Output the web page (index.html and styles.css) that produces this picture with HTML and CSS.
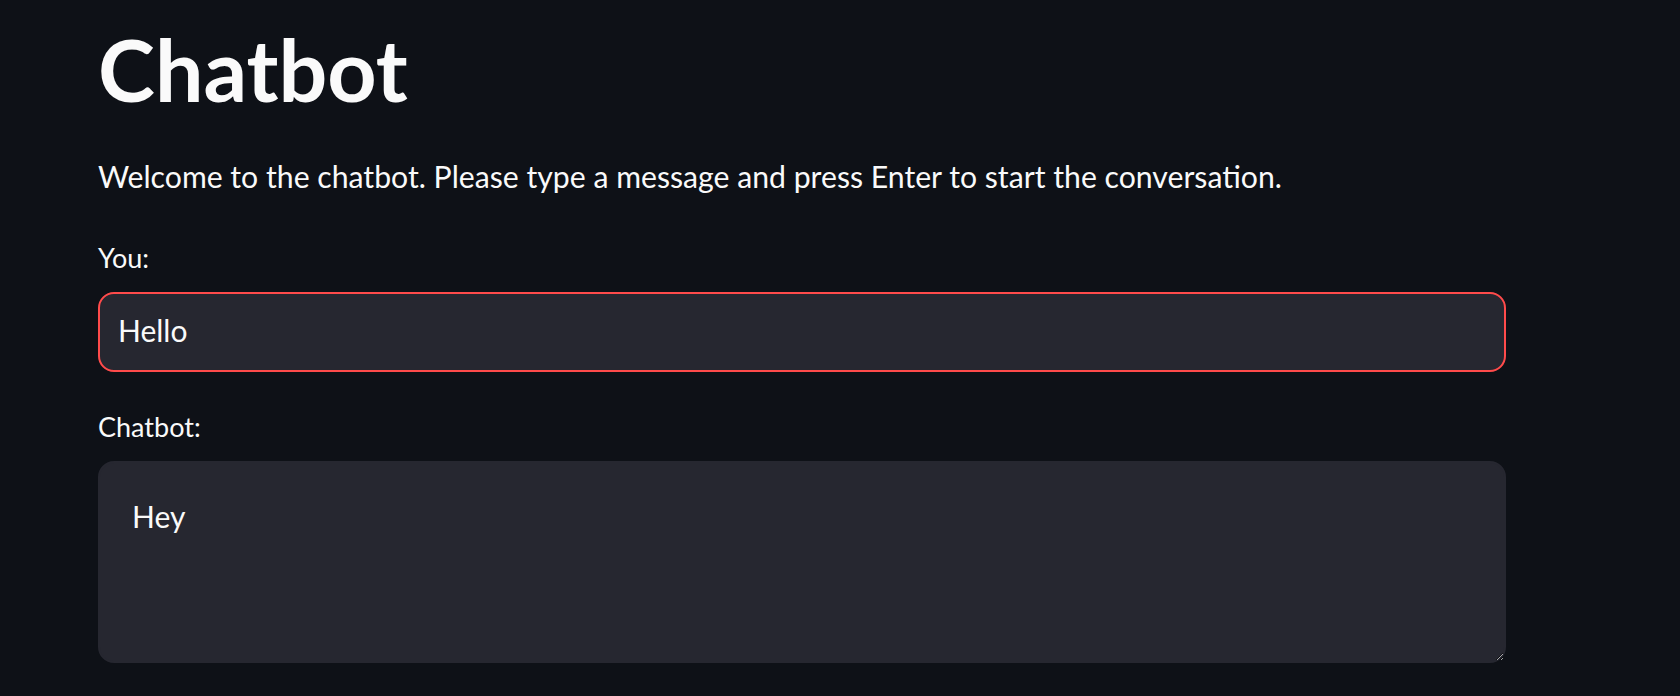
FILE: index.html
```html
<!DOCTYPE html>
<html lang="en">
<head>
<meta charset="utf-8">
<title>Chatbot</title>
<link rel="stylesheet" href="styles.css">
</head>
<body>
<main class="main">
  <h1 class="title">Chatbot</h1>
  <p class="intro">Welcome to the chatbot. Please type a message and press Enter to start the conversation.</p>
  <label class="label" for="you">You:</label>
  <input class="text-input" id="you" type="text" value="Hello">
  <label class="label label-bot" for="bot">Chatbot:</label>
  <textarea class="text-area" id="bot">Hey</textarea>
</main>
</body>
</html>
```

FILE: styles.css
```css
html, body {
  margin: 0;
  padding: 0;
  background: #0e1117;
  color: #fafafa;
  color-scheme: dark;
  font-family: Lato, "Noto Sans", sans-serif;
}
.main {
  display: flex;
  flex-direction: column;
  align-items: flex-start;
  width: 1408px;
  padding-left: 98px;
  padding-top: 17px;
}
.title {
  margin: 0;
  font-size: 86px;
  line-height: 1.2;
  font-weight: 700;
}
.intro {
  margin: 31px 0 0;
  font-size: 30.2px;
  line-height: 51px;
}
.label {
  margin-top: 33px;
  font-size: 27px;
  line-height: 45px;
}
.label-bot {
  margin-top: 32px;
}
.text-input {
  box-sizing: border-box;
  margin: 12px 0 0;
  width: 1408px;
  height: 80px;
  padding: 0 18px 4px;
  border: 2px solid #ff4b4b;
  border-radius: 16px;
  background: #262730;
  color: #fafafa;
  font-family: inherit;
  font-size: 30px;
  outline: none;
}
.text-area {
  box-sizing: border-box;
  margin: 12px 0 0;
  width: 1408px;
  height: 202px;
  padding: 28px 32px 0;
  border: 2px solid #262730;
  border-radius: 16px;
  background: #262730;
  color: #fafafa;
  font-family: inherit;
  font-size: 30px;
  line-height: 51px;
  resize: vertical;
  outline: none;
}
```
